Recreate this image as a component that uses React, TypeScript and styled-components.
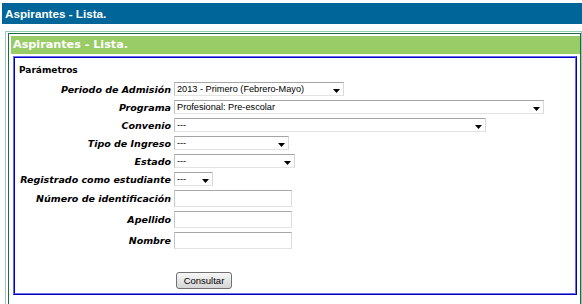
import React from "react";
import styled, { createGlobalStyle } from "styled-components";

const Global = createGlobalStyle`
  html, body { margin: 0; padding: 0; background: #fff; overflow: hidden; }
  * { box-sizing: border-box; }
`;

const Page = styled.div`
  padding-top: 3px;
  width: 582px;
  height: 304px;
  overflow: hidden;
`;

const TopBar = styled.div`
  margin-left: 2px;
  height: 21px;
  background: #006699;
  color: #fff;
  font: bold 11.7px "Liberation Sans", Arial, sans-serif;
  line-height: 21px;
  padding-left: 3px;
`;

const OuterBox = styled.div`
  margin: 7px 0 0 5px;
  width: 577px;
  border: 1px solid #93cdb3;
  padding: 1px 0 0 2px;
`;

const InnerBox = styled.div`
  border: 1px solid #1f6b45;
  padding: 2px 0 30px 2px;
`;

const SectionHeader = styled.div`
  height: 18px;
  background: #99cc66;
  color: #fff;
  font: bold 11.2px "DejaVu Sans", Verdana, sans-serif;
  line-height: 18px;
  padding-left: 2px;
`;

const Frame = styled.div`
  margin: 2px 3px 0 2px;
  border-style: solid;
  border-width: 1px;
  border-color: #6a6af0 #0000b8 #0000b8 #6a6af0;
`;

const FrameInner = styled.div`
  border-style: solid;
  border-width: 1px;
  border-color: #0000c8 #7070f0 #7070f0 #0000c8;
  padding: 6px 4px 4px 4px;
`;

const Legend = styled.div`
  font: bold 9px "DejaVu Sans", Verdana, sans-serif;
  line-height: 12px;
  color: #000;
  margin-bottom: 4px;
`;

const Row = styled.div<{ $h: number; $top?: boolean }>`
  display: flex;
  align-items: ${(p) => (p.$top ? "flex-start" : "center")};
  gap: 3px;
  height: ${(p) => p.$h}px;
`;

const Label = styled.label`
  flex: 0 0 152px;
  text-align: right;
  font: italic bold 9.5px "DejaVu Sans", Verdana, sans-serif;
  color: #000;
  white-space: nowrap;
`;

const SelectWrap = styled.div<{ $w: number }>`
  position: relative;
  width: ${(p) => p.$w}px;
  height: 14px;
`;

const NativeSelect = styled.select`
  appearance: none;
  -webkit-appearance: none;
  display: block;
  width: 100%;
  height: 100%;
  margin: 0;
  border: 1px solid;
  border-color: #a5a5a5 #d9d9d9 #e3e3e3 #c2c2c2;
  border-radius: 0;
  background: #fff;
  font: 9.2px "Liberation Sans", Arial, sans-serif;
  color: #000;
  padding: 0 12px 0 2px;
  outline: none;
`;

const Arrow = styled.svg`
  position: absolute;
  right: 4px;
  bottom: 3px;
  width: 7px;
  height: 4px;
  pointer-events: none;
`;

const TextInput = styled.input`
  display: block;
  width: 118px;
  height: 17px;
  margin: 0;
  border: 1px solid;
  border-color: #a8a8a8 #dcdcdc #e2e2e2 #c6c6c6;
  background: #fff;
  font: 9.2px "Liberation Sans", Arial, sans-serif;
  padding: 0 2px;
  outline: none;
`;

const Button = styled.button`
  margin: 0 0 0 2px;
  width: 56px;
  height: 17px;
  padding: 0;
  border: 1px solid #707070;
  border-radius: 3px;
  background: linear-gradient(#f7f7f7, #e6e6e6 50%, #d6d6d6);
  font: 9.5px "Liberation Sans", Arial, sans-serif;
  color: #000;
`;

const Select = ({ w, value }: { w: number; value: string }) => (
  <SelectWrap $w={w}>
    <NativeSelect defaultValue={value}>
      <option value={value}>{value}</option>
    </NativeSelect>
    <Arrow viewBox="0 0 7 4">
      <polygon points="0,0 7,0 3.5,4" fill="#000" />
    </Arrow>
  </SelectWrap>
);

export default function App() {
  return (
    <>
      <Global />
      <Page>
        <TopBar>Aspirantes - Lista.</TopBar>
        <OuterBox>
          <InnerBox>
            <SectionHeader>Aspirantes - Lista.</SectionHeader>
            <Frame>
              <FrameInner>
                <Legend>Parámetros</Legend>
                <Row $h={18}>
                  <Label>Periodo de Admisión</Label>
                  <Select w={170} value="2013 - Primero (Febrero-Mayo)" />
                </Row>
                <Row $h={18}>
                  <Label>Programa</Label>
                  <Select w={370} value="Profesional: Pre-escolar" />
                </Row>
                <Row $h={18}>
                  <Label>Convenio</Label>
                  <Select w={312} value="---" />
                </Row>
                <Row $h={18}>
                  <Label>Tipo de Ingreso</Label>
                  <Select w={115} value="---" />
                </Row>
                <Row $h={18}>
                  <Label>Estado</Label>
                  <Select w={121} value="---" />
                </Row>
                <Row $h={18}>
                  <Label>Registrado como estudiante</Label>
                  <Select w={39} value="---" />
                </Row>
                <Row $h={21}>
                  <Label>Número de identificación</Label>
                  <TextInput />
                </Row>
                <Row $h={21}>
                  <Label>Apellido</Label>
                  <TextInput />
                </Row>
                <Row $h={21}>
                  <Label>Nombre</Label>
                  <TextInput />
                </Row>
                <Row $h={21} />
                <Row $h={17} $top>
                  <Label />
                  <Button>Consultar</Button>
                </Row>
              </FrameInner>
            </Frame>
          </InnerBox>
        </OuterBox>
      </Page>
    </>
  );
}
